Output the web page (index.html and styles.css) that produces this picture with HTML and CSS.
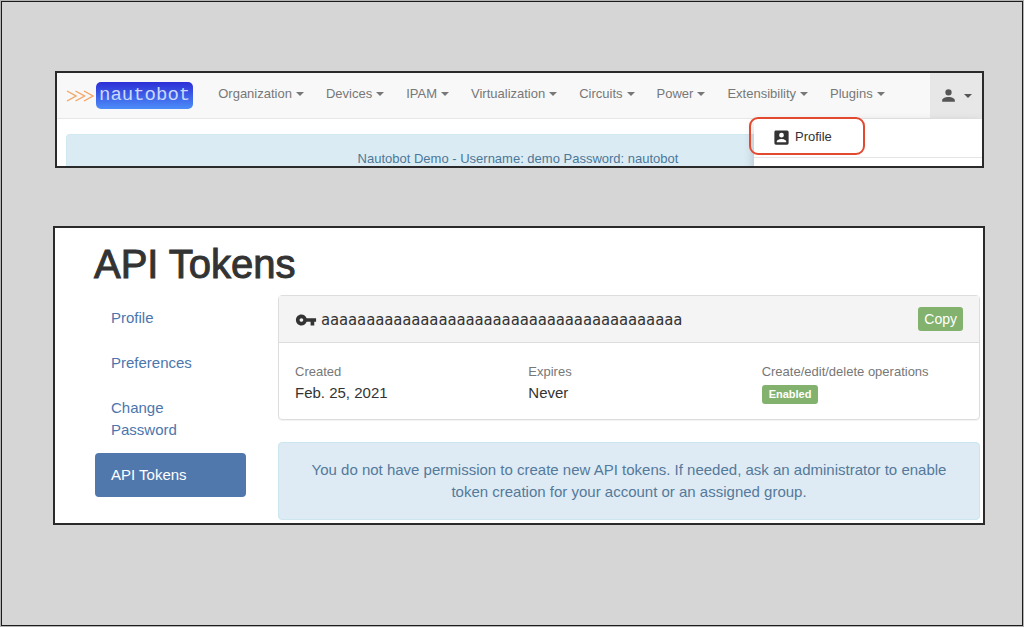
FILE: index.html
```
<!DOCTYPE html>
<html lang="en">
<head>
    <meta charset="UTF-8">
    <meta name="viewport" content="width=device-width, initial-scale=1.0">
    <title>Nautobot - API Tokens</title>
    <link rel="stylesheet" href="styles.css">
</head>
<body>
    <div class="frame">
        <section class="window nav-window">
            <header class="navbar">
                <a href="#" class="brand">
                    <svg class="brand-arrows" viewBox="0 0 28 12" aria-hidden="true">
                        <path d="M1 1L10 6L1 11M9.500 1L18.500 6L9.500 11M18 1L27 6L18 11"/>
                    </svg>
                    <span class="brand-name">nautobot</span>
                </a>
                <nav class="menu">
                    <button type="button">Organization <span class="caret"></span></button>
                    <button type="button">Devices <span class="caret"></span></button>
                    <button type="button">IPAM <span class="caret"></span></button>
                    <button type="button">Virtualization <span class="caret"></span></button>
                    <button type="button">Circuits <span class="caret"></span></button>
                    <button type="button">Power <span class="caret"></span></button>
                    <button type="button">Extensibility <span class="caret"></span></button>
                    <button type="button">Plugins <span class="caret"></span></button>
                </nav>
                <button type="button" class="user-toggle" aria-label="User menu">
                    <svg class="icon" viewBox="0 0 24 24" aria-hidden="true">
                        <path d="M12 4A4 4 0 0 1 16 8A4 4 0 0 1 12 12A4 4 0 0 1 8 8A4 4 0 0 1 12 4M12 14C16.42 14 20 15.79 20 18V20H4V18C4 15.79 7.58 14 12 14Z"/>
                    </svg>
                    <span class="caret"></span>
                </button>
                <div class="user-menu">
                    <a href="#" class="user-menu-item">
                        <svg class="icon" viewBox="0 0 24 24" aria-hidden="true">
                            <path d="M6 17C6 15 10 13.9 12 13.9S18 15 18 17V18H6M15 9A3 3 0 0 1 12 12A3 3 0 0 1 9 9A3 3 0 0 1 12 6A3 3 0 0 1 15 9M3 5V19A2 2 0 0 0 5 21H19A2 2 0 0 0 21 19V5A2 2 0 0 0 19 3H5C3.89 3 3 3.9 3 5Z"/>
                        </svg>
                        Profile
                    </a>
                    <div class="highlight"></div>
                </div>
            </header>
            <div class="banner">Nautobot Demo - Username: demo Password: nautobot</div>
        </section>

        <section class="window tokens-window">
            <h1>API Tokens</h1>
            <div class="columns">
                <nav class="side-nav">
                    <a href="#">Profile</a>
                    <a href="#">Preferences</a>
                    <a href="#">Change Password</a>
                    <a href="#" class="active">API Tokens</a>
                </nav>
                <main class="content">
                    <div class="card">
                        <div class="card-header">
                            <svg class="key-icon" viewBox="0 0 24 24" aria-hidden="true">
                                <path d="M7 14C5.9 14 5 13.1 5 12S5.9 10 7 10S9 10.9 9 12S8.1 14 7 14M12.65 10C11.83 7.67 9.61 6 7 6C3.69 6 1 8.69 1 12S3.69 18 7 18C9.61 18 11.83 16.33 12.65 14H17V18H21V14H23V10H12.65Z"/>
                            </svg>
                            <span class="token">aaaaaaaaaaaaaaaaaaaaaaaaaaaaaaaaaaaaaaaa</span>
                            <button type="button" class="copy">Copy</button>
                        </div>
                        <dl class="details">
                            <div>
                                <dt>Created</dt>
                                <dd>Feb. 25, 2021</dd>
                            </div>
                            <div>
                                <dt>Expires</dt>
                                <dd>Never</dd>
                            </div>
                            <div>
                                <dt>Create/edit/delete operations</dt>
                                <dd><span class="badge">Enabled</span></dd>
                            </div>
                        </dl>
                    </div>
                    <div class="alert">You do not have permission to create new API tokens. If needed, ask an administrator to enable token creation for your account or an assigned group.</div>
                </main>
            </div>
        </section>
    </div>
</body>
</html>
```
FILE: styles.css
```
* {
    box-sizing: border-box;
}

body {
    margin: 0;
    padding: 1px;
    background: #b4b4b4;
    color: #333;
    font-family: "Liberation Sans", Arial, sans-serif;
    font-size: 15px;
    line-height: 22px;
}

a {
    color: #4b76ad;
    text-decoration: none;
}

button {
    border: 0;
    padding: 0;
    font-family: inherit;
    cursor: pointer;
}

.frame {
    min-height: calc(100vh - 2px);
    padding: 69px 37px 69px 51px;
    border: 1px solid #1c1c1c;
    background: #d6d6d6;
}

.window {
    border: 2px solid #2a2a2a;
    background: #fff;
}

/* Top bar */
.nav-window {
    margin: 0 1px 58px 2px;
    overflow: hidden;
    font-size: 13px;
}

.navbar {
    position: relative;
    display: flex;
    align-items: center;
    height: 46px;
    padding-left: 9px;
    border-bottom: 1px solid #e7e7e7;
    background: #f8f8f8;
}

.brand {
    display: flex;
    align-items: center;
    gap: 2px;
    margin-right: 25px;
}

.brand-arrows {
    width: 28px;
    height: 12px;
    fill: none;
    stroke: #f5a460;
    stroke-width: 1.4;
}

.brand-name {
    padding: 0 3px;
    border-radius: 5px;
    background: linear-gradient(#2d2fd6, #4b8df8);
    color: #ccd8ff;
    font-family: "Liberation Mono", monospace;
    font-size: 19px;
    line-height: 27px;
}

.menu {
    display: flex;
    gap: 22px;
    padding-bottom: 4px;
}

.menu button {
    display: flex;
    align-items: center;
    gap: 4px;
    background: none;
    color: #777;
    font-size: 13px;
    line-height: 20px;
}

.caret {
    border-top: 4px solid;
    border-left: 4px solid transparent;
    border-right: 4px solid transparent;
}

.icon {
    width: 19px;
    height: 19px;
    fill: currentColor;
}

.user-toggle {
    display: flex;
    align-items: center;
    align-self: stretch;
    gap: 6px;
    margin-left: auto;
    padding: 0 10px 0 9px;
    background: #e7e7e7;
    color: #555;
}

.user-menu {
    position: absolute;
    top: calc(100% + 1px);
    right: 0;
    z-index: 1;
    width: 228px;
    height: 60px;
    background: #fff;
    box-shadow: 0 4px 10px rgba(0, 0, 0, 0.2);
}

.user-menu-item {
    display: flex;
    align-items: center;
    gap: 4px;
    padding: 8px 18px 10px;
    border-bottom: 1px solid #e5e5e5;
    color: #333;
    line-height: 20px;
}

/* Ring around the Profile entry */
.highlight {
    position: absolute;
    top: -2px;
    left: -5px;
    width: 116px;
    height: 38px;
    border: 2px solid #e2492f;
    border-radius: 9px;
}

.banner {
    margin: 15px 12px 0 9px;
    padding: 16px 16px 0;
    border: 1px solid #d0e9f0;
    border-bottom: 0;
    border-radius: 4px 4px 0 0;
    background: #dbebf4;
    color: #4b7898;
    line-height: 15px;
    text-align: center;
}

/* API tokens page */
.tokens-window {
    padding: 15px 3px 3px 39px;
}

.tokens-window h1 {
    margin: 0 0 9px;
    font-size: 40px;
    font-weight: normal;
    line-height: 43px;
    -webkit-text-stroke: 1px currentColor;
}

.columns {
    display: flex;
    gap: 32px;
    padding-left: 1px;
}

.side-nav {
    display: flex;
    flex: 0 0 151px;
    flex-direction: column;
    gap: 1px;
    padding-top: 1px;
}

.side-nav a {
    padding: 11px 16px;
    border-radius: 4px;
}

.side-nav .active {
    background: #5078ad;
    color: #fff;
}

.content {
    flex: 1;
}

.card {
    margin-bottom: 22px;
    border: 1px solid #ddd;
    border-radius: 4px;
    box-shadow: 0 1px 1px rgba(0, 0, 0, 0.05);
}

.card-header {
    display: flex;
    align-items: flex-end;
    gap: 4px;
    padding: 11px 16px;
    border-bottom: 1px solid #ddd;
    background: #f4f4f4;
}

.key-icon {
    width: 22px;
    height: 22px;
    fill: #333;
}

.token {
    font-family: "DejaVu Sans Mono", monospace;
}

.copy {
    margin-left: auto;
    padding: 0 6px;
    border-radius: 3px;
    background: #83b26e;
    color: #fff;
    font-size: 14px;
    line-height: 24px;
}

.details {
    display: grid;
    grid-template-columns: repeat(3, 1fr);
    margin: 0;
    padding: 19px 0 15px;
}

.details div {
    padding-left: 16px;
}

.details dt {
    color: #777;
    font-size: 13px;
    line-height: 20px;
}

.details dd {
    display: flex;
    align-items: flex-end;
    height: 22px;
    margin: 0;
}

.badge {
    padding: 0 7px;
    border-radius: 3px;
    background: #83b26e;
    color: #fff;
    font-size: 11px;
    font-weight: bold;
    line-height: 19px;
}

.alert {
    padding: 16px;
    border: 1px solid #cbe6ee;
    border-radius: 4px;
    background: #deebf4;
    color: #54799a;
    text-align: center;
}
```
